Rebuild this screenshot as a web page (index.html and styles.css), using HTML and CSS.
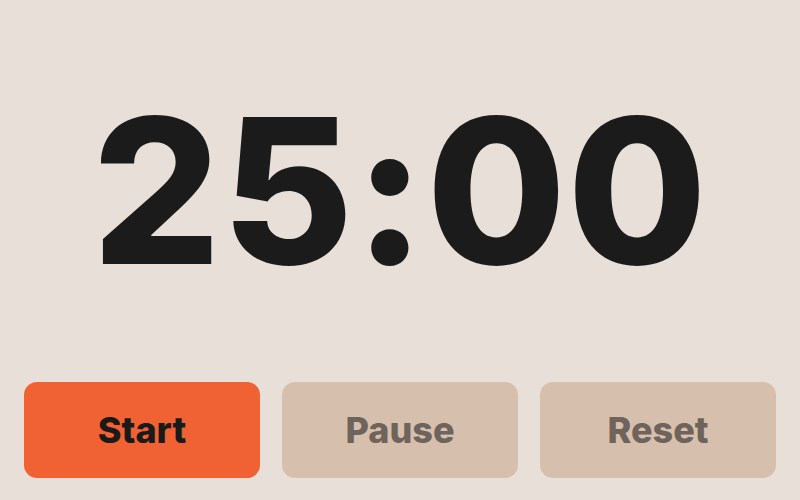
FILE: index.html
```html
<!DOCTYPE html>
<html>
<head>
<meta charset="utf-8">
<link rel="stylesheet" href="styles.css">
</head>
<body>
<div class="app">
  <div class="display"><span class="time">25:00</span></div>
  <div class="controls">
    <button class="btn btn-primary">Start</button>
    <button class="btn btn-muted">Pause</button>
    <button class="btn btn-muted">Reset</button>
  </div>
</div>
</body>
</html>
```
FILE: styles.css
```css
html, body {
  margin: 0;
  padding: 0;
  background: #e8e0d8;
}
.app {
  width: 800px;
  height: 500px;
  display: flex;
  flex-direction: column;
  font-family: Inter, "Liberation Sans", sans-serif;
}
.display {
  flex: 1;
  display: flex;
  align-items: center;
  justify-content: center;
  padding-top: 0;
}
.time {
  font-size: 202px;
  font-weight: 800;
  color: #1b1b1b;
  letter-spacing: 1px;
  line-height: 1;
}
.controls {
  display: grid;
  grid-template-columns: 1fr 1fr 1fr;
  gap: 22px;
  padding: 0 24px 22px;
}
.btn {
  height: 96px;
  border: none;
  border-radius: 13px;
  font-family: Inter, "Liberation Sans", sans-serif;
  font-size: 36px;
  font-weight: 800;
}
.btn-primary {
  background: #f06234;
  color: #1c1a18;
}
.btn-muted {
  background: #d6c0ad;
  color: #6f645c;
}
```
